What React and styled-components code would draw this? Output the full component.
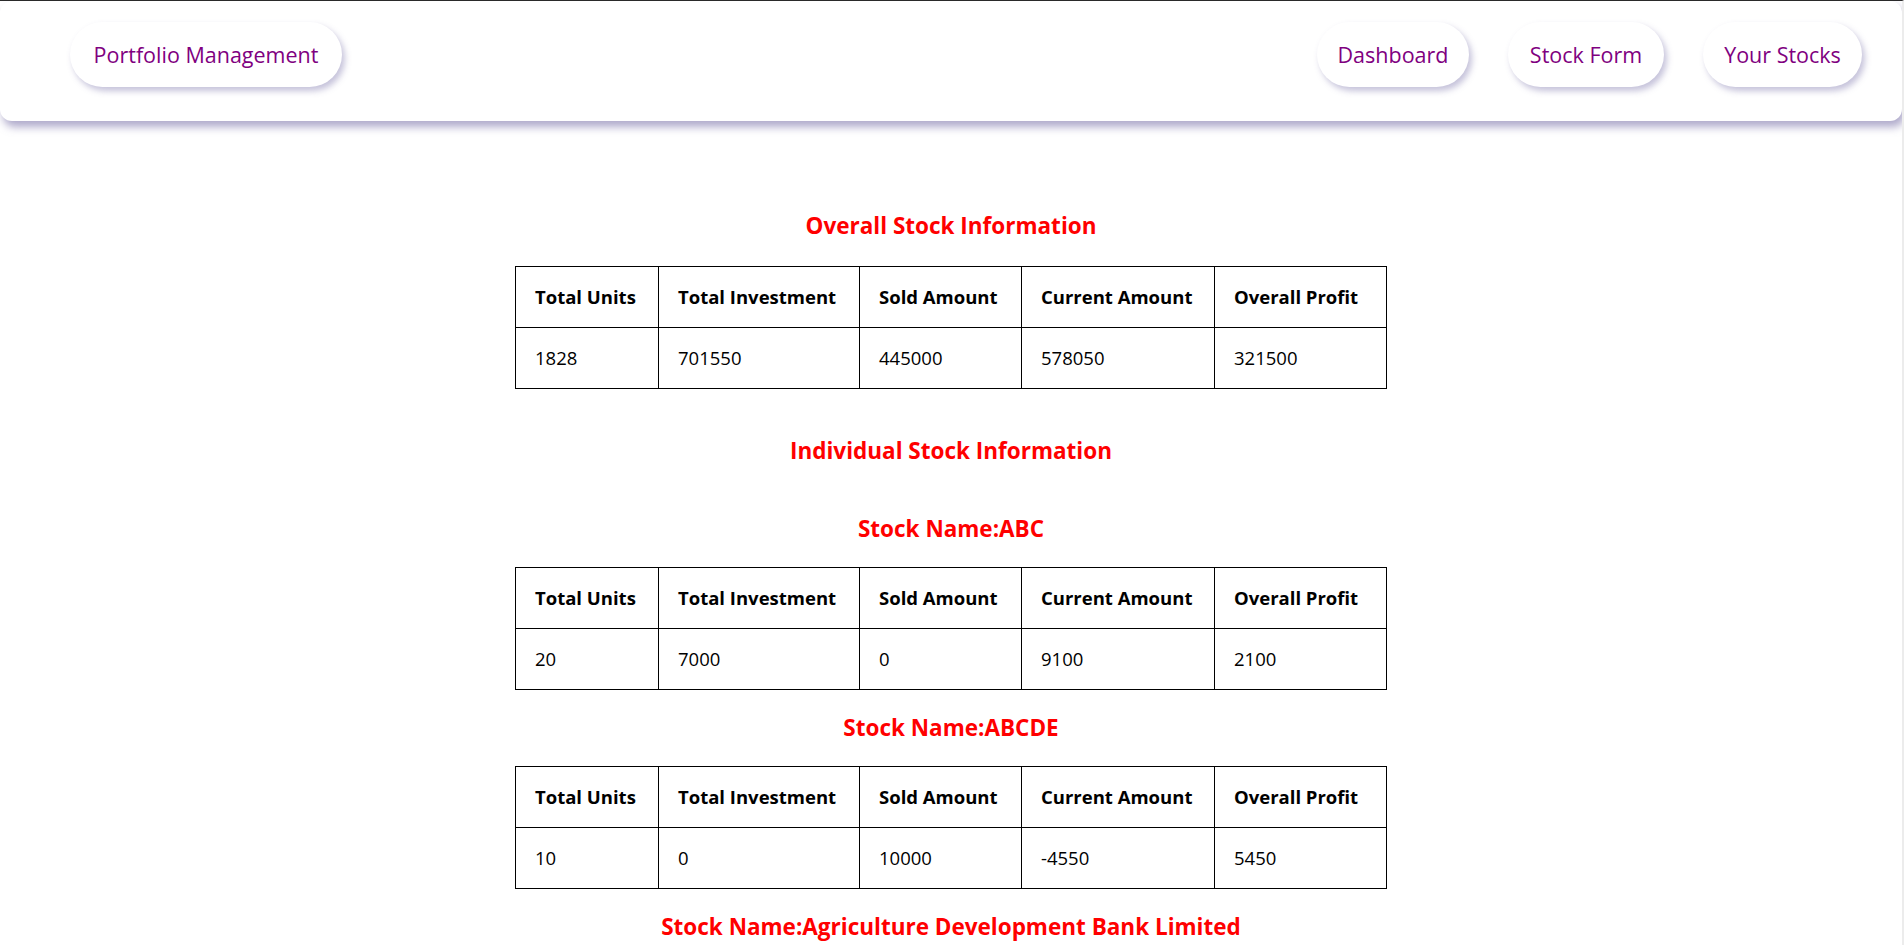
import React from "react";
import styled, { createGlobalStyle } from "styled-components";

const GlobalStyle = createGlobalStyle`
  html {
    border-top: 1px solid #2a2a2a;
    border-right: 2px solid #ececec;
  }
  body {
    margin: 0;
    background: #ffffff;
    font-family: "Open Sans", "Noto Sans", sans-serif;
    color: #000;
  }
`;

const NavBar = styled.nav`
  display: flex;
  align-items: flex-start;
  justify-content: space-between;
  height: 120px;
  padding: 21px 40px 0 70px;
  background: #fff;
  border-radius: 12px;
  box-shadow: 3px 6px 8px rgba(110, 100, 160, 0.55);
  box-sizing: border-box;
`;

const NavLinks = styled.div`
  display: flex;
  gap: 39px;
`;

const Pill = styled.a`
  display: flex;
  align-items: center;
  justify-content: center;
  height: 65px;
  width: ${(p) => p.$w}px;
  border-radius: 33px;
  background: #fff;
  color: #800080;
  font-size: 21.5px;
  text-decoration: none;
  box-shadow: 3px 4px 6px rgba(90, 80, 150, 0.35);
  cursor: pointer;
`;

const Main = styled.main`
  display: flex;
  flex-direction: column;
  align-items: center;
  padding-top: 91px;
`;

const Heading = styled.h2`
  margin: ${(p) => p.$mt || 0}px 0 ${(p) => p.$mb || 0}px;
  height: 28px;
  line-height: 28px;
  font-size: 22.5px;
  font-weight: 700;
  color: #ff0000;
  text-align: center;
`;

const Table = styled.table`
  width: 871px;
  table-layout: fixed;
  border-collapse: collapse;
  font-size: 18.5px;
`;

const Cell = styled.td`
  border: 1px solid #000;
  padding: 20px 19px;
  line-height: 20px;
  text-align: left;
  white-space: nowrap;
  font-weight: ${(p) => (p.$head ? 700 : 400)};
`;

const cols = [143, 201, 162, 193, 172];
const heads = [
  "Total Units",
  "Total Investment",
  "Sold Amount",
  "Current Amount",
  "Overall Profit",
];

const overall = [1828, 701550, 445000, 578050, 321500];

const stocks = [
  { name: "ABC", vals: [20, 7000, 0, 9100, 2100] },
  { name: "ABCDE", vals: [10, 0, 10000, -4550, 5450] },
  {
    name: "Agriculture Development Bank Limited",
    vals: [100, 45000, 0, 52000, 7000],
  },
];

const StockTable = ({ vals }) => (
  <Table>
    <colgroup>
      {cols.map((w, i) => (
        <col key={i} style={{ width: w }} />
      ))}
    </colgroup>
    <thead>
      <tr>
        {heads.map((h) => (
          <Cell as="th" $head key={h}>
            {h}
          </Cell>
        ))}
      </tr>
    </thead>
    <tbody>
      <tr>
        {vals.map((v, i) => (
          <Cell key={i}>{v}</Cell>
        ))}
      </tr>
    </tbody>
  </Table>
);

const App = () => {
  return (
    <>
      <GlobalStyle />
      <NavBar>
        <Pill $w={272}>Portfolio Management</Pill>
        <NavLinks>
          <Pill $w={152}>Dashboard</Pill>
          <Pill $w={156}>Stock Form</Pill>
          <Pill $w={159}>Your Stocks</Pill>
        </NavLinks>
      </NavBar>
      <Main>
        <Heading $mb={26}>Overall Stock Information</Heading>
        <StockTable vals={overall} />
        <Heading $mt={48}>Individual Stock Information</Heading>
        {stocks.map((s) => (
          <React.Fragment key={s.name}>
            <Heading $mt={s.name === "ABC" ? 50 : 24} $mb={24}>
              Stock Name:{s.name}
            </Heading>
            <StockTable vals={s.vals} />
          </React.Fragment>
        ))}
        <div style={{ height: 60 }} />
      </Main>
    </>
  );
};

export default App;
